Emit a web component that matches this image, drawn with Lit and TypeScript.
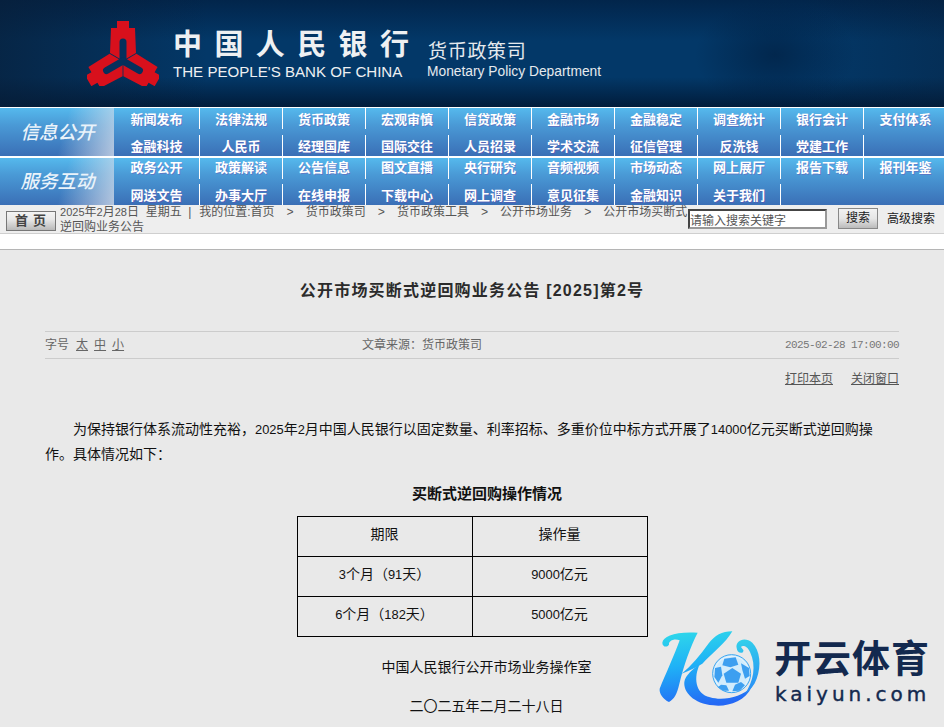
import { LitElement, css, html, svg } from 'lit'
import { customElement } from 'lit/decorators.js'

const NAV_ROWS = [
  {
    title: '信息公开',
    lines: [
      ['新闻发布', '法律法规', '货币政策', '宏观审慎', '信贷政策', '金融市场', '金融稳定', '调查统计', '银行会计', '支付体系'],
      ['金融科技', '人民币', '经理国库', '国际交往', '人员招录', '学术交流', '征信管理', '反洗钱', '党建工作', ''],
    ],
  },
  {
    title: '服务互动',
    lines: [
      ['政务公开', '政策解读', '公告信息', '图文直播', '央行研究', '音频视频', '市场动态', '网上展厅', '报告下载', '报刊年鉴'],
      ['网送文告', '办事大厅', '在线申报', '下载中心', '网上调查', '意见征集', '金融知识', '关于我们', '', ''],
    ],
  },
]

const CRUMBS = ['货币政策司', '货币政策工具', '公开市场业务']

// one arm of the bank emblem, repeated three times around the centre
const emblemArm = svg`
  <polygon fill="#d8101c" points="-6,-40 6,-40 6,-33 12,-33 13,-8 0.6,-0.8 -0.6,-0.8 -13,-8 -12,-33 -6,-33" />
  <line x1="0" y1="0" x2="0" y2="-19" stroke="#07305c" stroke-width="7" stroke-linecap="round" />
`

@customElement('app-root')
export class AppRoot extends LitElement {
  static styles = css`
    :host {
      display: block;
      height: 727px;
      overflow: hidden;
      position: relative;
      background: #e9e9e9;
      font-family: "Liberation Sans", "Noto Sans CJK SC", sans-serif;
      font-size: 12px;
      color: #111;
    }
    .banner {
      height: 107px;
      display: flex;
      align-items: flex-start;
      background:
        radial-gradient(ellipse 80px 55px at 775px 55px, rgba(1, 28, 60, 0.6), rgba(1, 28, 60, 0) 100%),
        linear-gradient(90deg, rgba(8, 30, 56, 0.7), rgba(8, 30, 56, 0) 22%, rgba(8, 30, 56, 0) 85%, rgba(8, 30, 56, 0.35)),
        linear-gradient(180deg, #02254b 0%, #033868 38%, #033868 72%, #011c3b 100%);
    }
    .emblem {
      width: 72px;
      height: 66px;
      margin: 20px 14px 0 87px;
      flex: none;
    }
    .brand {
      padding-top: 28px;
      width: 254px;
      flex: none;
      color: #eef0f2;
    }
    .brand-cn {
      font-size: 29px;
      font-weight: 700;
      letter-spacing: 12.4px;
      line-height: 35px;
      white-space: nowrap;
    }
    .brand-en {
      font-size: 15.1px;
      line-height: 17px;
      white-space: nowrap;
    }
    .dept {
      padding-top: 40px;
      color: #e6eaee;
    }
    .dept-cn {
      font-size: 19px;
      line-height: 24px;
      letter-spacing: 0.7px;
      padding-left: 1px;
    }
    .dept-en {
      font-size: 13.8px;
      line-height: 15px;
      white-space: nowrap;
    }
    .nav {
      background: #fff;
      padding-top: 1px;
    }
    .nav-row {
      display: flex;
      height: 48px;
      background: linear-gradient(180deg, #55b9ed 0%, #4a9ad6 35%, #3a6fb6 100%);
    }
    .nav-row + .nav-row {
      margin-top: 2px;
      height: 47px;
    }
    .nav-title {
      width: 114px;
      flex: none;
      display: flex;
      align-items: center;
      justify-content: center;
      padding: 0 0 2px 1px;
      box-sizing: border-box;
      font-size: 18.5px;
      font-style: italic;
      font-weight: 500;
      color: #eaf3fa;
      background: linear-gradient(105deg, rgba(255, 255, 255, 0) 55%, rgba(220, 225, 235, 0.75) 100%);
    }
    .nav-row + .nav-row .nav-title {
      padding-bottom: 4px;
    }
    .nav-lines {
      flex: 1;
      display: flex;
      flex-direction: column;
      justify-content: space-between;
    }
    .nav-line {
      display: grid;
      grid-template-columns: 86px repeat(8, 83px) 1fr;
      height: 21px;
    }
    .nav-item {
      font-size: 13px;
      font-weight: 700;
      line-height: 23px;
      height: 21px;
      text-align: center;
      color: #fff;
      white-space: nowrap;
      text-shadow: 1px 1px 0 rgba(120, 60, 170, 0.35);
    }
    .nav-item:last-child {
      padding-left: 3px;
    }
    .nav-row + .nav-row .nav-line:first-child .nav-item {
      line-height: 19px;
    }
    .nav-item.rule {
      border-right: 1px solid #fff;
    }
    .nav-item.rule:last-child {
      border-right: none;
    }
    .crumbs {
      height: 28px;
      display: flex;
      background: #eeeeee;
      border-bottom: 1px solid #cfcfcf;
    }
    .home {
      width: 50px;
      height: 20px;
      margin: 6px 4px 0 6px;
      flex: none;
      box-sizing: border-box;
      border: 1px solid #777;
      background: linear-gradient(180deg, #f4f4f4 0%, #e8e8e8 40%, #b9b9b9 100%);
      font-size: 13px;
      font-weight: 700;
      line-height: 17px;
      text-align: center;
      letter-spacing: 5px;
      padding-left: 4px;
      color: #444;
    }
    .trail {
      width: 628px;
      flex: none;
      font-size: 12px;
      line-height: 14px;
      color: #555;
    }
    .here {
      margin-left: 1px;
    }
    .sep {
      margin: 0 12px;
      font-family: "Liberation Mono", monospace;
    }
    .n {
      font-size: 0.92em;
    }
    .search {
      display: flex;
      align-items: flex-start;
      flex: 1;
      padding-top: 3px;
    }
    .search input {
      width: 139px;
      height: 20px;
      box-sizing: border-box;
      border: 2px solid;
      border-color: #444 #999 #999 #444;
      margin: 1px 11px 0 0;
      padding: 0;
      background: #fff;
      font: 12px "Noto Sans CJK SC", sans-serif;
    }
    .search input::placeholder {
      color: #555;
      opacity: 1;
    }
    .search-btn {
      width: 40px;
      height: 21px;
      box-sizing: border-box;
      border: 1px solid #888;
      background: linear-gradient(180deg, #f2f2f2 0%, #e6e6e6 50%, #bbb 100%);
      font-size: 12px;
      line-height: 18px;
      text-align: center;
      color: #222;
      margin-right: 9px;
    }
    .adv {
      line-height: 23px;
      white-space: nowrap;
      color: #222;
    }
    .spacer {
      height: 15px;
      background: #fff;
      border-bottom: 1px solid #b5b5b5;
    }
    .article {
      padding: 0 45px;
    }
    h1 {
      margin: 0;
      padding-top: 29px;
      height: 52px;
      font-size: 16px;
      line-height: 24px;
      font-weight: 700;
      letter-spacing: 1.2px;
      text-align: center;
      color: #2b2b2b;
    }
    .meta {
      display: grid;
      grid-template-columns: 317px auto 1fr;
      height: 26px;
      line-height: 26px;
      border-top: 1px solid #ccc;
      border-bottom: 1px solid #ccc;
      color: #666;
    }
    .sizes span {
      text-decoration: underline;
      margin-left: 6px;
    }
    .sizes span:first-child {
      margin-left: 7px;
    }
    .date {
      text-align: right;
      font-family: "Liberation Mono", monospace;
      font-size: 11px;
      letter-spacing: -0.6px;
      color: #777;
    }
    .tools {
      display: flex;
      justify-content: flex-end;
      gap: 18px;
      padding-top: 12px;
      height: 19px;
      line-height: 17px;
      color: #555;
    }
    .tools span {
      text-decoration: underline;
    }
    .body {
      font-size: 14px;
      color: #111;
    }
    .body p {
      margin: 0;
      line-height: 25px;
      white-space: nowrap;
    }
    .lead {
      padding-top: 27px;
    }
    .lead p:first-child {
      text-indent: 28px;
    }
    .caption {
      margin-top: 15px;
      padding-left: 30px;
      font-size: 15px;
      font-weight: 700;
      text-align: center;
      line-height: 24px;
    }
    table {
      margin: 10px auto 0;
      width: 351px;
      border-collapse: collapse;
      table-layout: fixed;
    }
    td {
      border: 1px solid #000;
      height: 40px;
      padding: 0 0 8px;
      text-align: center;
      font-size: 14px;
      box-sizing: border-box;
    }
    .sign {
      text-align: center;
      padding: 18px 0 0 29px;
    }
    .sign p + p {
      margin-top: 14px;
    }
    .wm {
      position: absolute;
      left: 655px;
      top: 622px;
      display: flex;
    }
    .wm svg {
      width: 120px;
      height: 90px;
      flex: none;
    }
    .wm-text {
      color: #13294f;
    }
    .wm-cn {
      font-size: 38px;
      font-weight: 700;
      line-height: 46px;
      margin: 14px 0 0 -1px;
      letter-spacing: 1px;
      white-space: nowrap;
    }
    .wm-en {
      font-family: "DejaVu Sans", sans-serif;
      font-size: 20px;
      line-height: 24px;
      letter-spacing: 4px;
      -webkit-text-stroke: 0.4px #13294f;
      white-space: nowrap;
    }
  `

  renderLine(items: string[]) {
    return html`<div class="nav-line">
      ${items.map((label) => html`<div class="nav-item ${label !== '' ? 'rule' : ''}">${label}</div>`)}
    </div>`
  }

  render() {
    return html`
      <div class="banner">
        <svg class="emblem" viewBox="-36 -41 72 66">
          ${[0, 120, 240].map((a) => svg`<g transform="rotate(${a})">${emblemArm}</g>`)}
        </svg>
        <div class="brand">
          <div class="brand-cn">中国人民银行</div>
          <div class="brand-en">THE PEOPLE'S BANK OF CHINA</div>
        </div>
        <div class="dept">
          <div class="dept-cn">货币政策司</div>
          <div class="dept-en">Monetary Policy Department</div>
        </div>
      </div>

      <div class="nav">
        ${NAV_ROWS.map(
          (row) => html`<div class="nav-row">
            <div class="nav-title">${row.title}</div>
            <div class="nav-lines">
              ${row.lines.map((line) => this.renderLine(line))}
            </div>
          </div>`,
        )}
      </div>

      <div class="crumbs">
        <div class="home">首页</div>
        <div class="trail">
          <span class="n">2025</span>年<span class="n">2</span>月<span class="n">28</span>日&nbsp; 星期五 &nbsp;|&nbsp; <span class="here">我的位置:首页</span><span class="sep">&gt;</span>${CRUMBS.map(
            (c) => html`${c}<span class="sep">&gt;</span>`,
          )}公开市场买断式逆回购业务公告
        </div>
        <div class="search">
          <input placeholder="请输入搜索关键字" />
          <div class="search-btn">搜索</div>
          <div class="adv">高级搜索</div>
        </div>
      </div>
      <div class="spacer"></div>

      <div class="article">
        <h1>公开市场买断式逆回购业务公告 [2025]第2号</h1>
        <div class="meta">
          <div class="sizes">字号<span>太</span><span>中</span><span>小</span></div>
          <div>文章来源：货币政策司</div>
          <div class="date">2025-02-28 17:00:00</div>
        </div>
        <div class="tools"><span>打印本页</span><span>关闭窗口</span></div>
        <div class="body">
          <div class="lead">
            <p>为保持银行体系流动性充裕，<span class="n">2025</span>年<span class="n">2</span>月中国人民银行以固定数量、利率招标、多重价位中标方式开展了<span class="n">14000</span>亿元买断式逆回购操</p>
            <p>作。具体情况如下：</p>
          </div>
          <div class="caption">买断式逆回购操作情况</div>
          <table>
            <tr><td>期限</td><td>操作量</td></tr>
            <tr><td><span class="n">3</span>个月（<span class="n">91</span>天）</td><td><span class="n">9000</span>亿元</td></tr>
            <tr><td><span class="n">6</span>个月（<span class="n">182</span>天）</td><td><span class="n">5000</span>亿元</td></tr>
          </table>
          <div class="sign">
            <p>中国人民银行公开市场业务操作室</p>
            <p>二〇二五年二月二十八日</p>
          </div>
        </div>
      </div>

      <div class="wm">
        <svg viewBox="0 0 360 270">
          <defs>
            <linearGradient id="k" gradientUnits="userSpaceOnUse" x1="120" y1="20" x2="150" y2="250">
              <stop offset="0" stop-color="#2fd8ea" />
              <stop offset="0.45" stop-color="#1fb2f6" />
              <stop offset="1" stop-color="#2468f5" />
            </linearGradient>
            <linearGradient id="c" gradientUnits="userSpaceOnUse" x1="250" y1="40" x2="290" y2="215">
              <stop offset="0" stop-color="#33d6ea" />
              <stop offset="1" stop-color="#2a8cf6" />
            </linearGradient>
          </defs>
          <path fill="url(#k)" d="M22 62 C25 42 60 28 128 32 C108 70 86 130 72 190 C66 215 58 232 42 240 C25 232 12 215 14 200 C30 160 58 100 74 55 C60 48 40 55 42 68 C35 78 22 74 22 62 Z" />
          <path fill="url(#k)" d="M232 28 C200 28 180 40 160 65 C135 100 110 130 80 155 C105 145 125 135 142 125 C165 100 215 60 232 28 Z" />
          <path fill="url(#k)" d="M135 125 C115 165 120 215 165 226 C205 238 260 225 290 195 C270 240 215 255 175 250 C115 245 85 210 88 180 C90 160 115 140 135 125 Z" />
          <path fill="url(#c)" d="M245 78 C240 55 270 42 292 62 C315 85 320 130 305 170 C298 190 285 205 270 215 C295 180 305 130 285 90 C278 72 262 68 258 75 C262 82 270 85 262 92 C252 94 246 88 245 78 Z" />
          <circle cx="230" cy="155" r="57" fill="#d2ecfc" stroke="#3ba6f2" stroke-width="3" />
          <circle cx="230" cy="155" r="52" fill="none" stroke="#eef8fe" stroke-width="2" />
          <g fill="#3d9ff0">
            <polygon points="232,138 258,155 250,182 214,182 206,155" />
            <polygon points="208,110 242,106 250,128 226,136 202,130" />
            <polygon points="180,138 198,134 202,160 190,182 178,165" />
            <polygon points="282,138 258,124 262,144 270,170 284,162" />
            <polygon points="198,188 214,190 222,206 205,206 188,196" />
            <polygon points="240,188 258,180 270,190 254,206 232,208" />
          </g>
        </svg>
        <div class="wm-text">
          <div class="wm-cn">开云体育</div>
          <div class="wm-en">kaiyun.com</div>
        </div>
      </div>
    `
  }
}
